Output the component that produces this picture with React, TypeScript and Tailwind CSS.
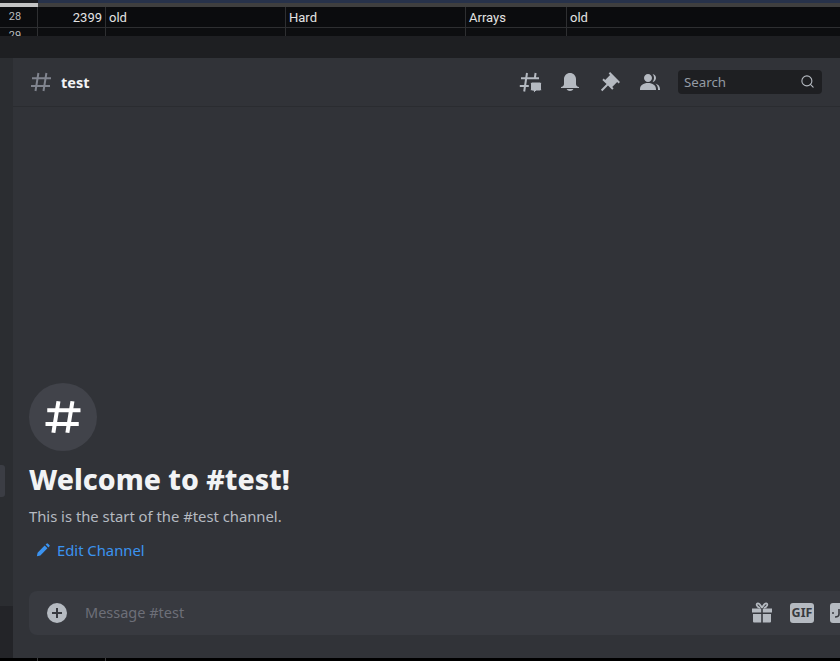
import React from 'react'
import { Search } from 'lucide-react'

const cols = ['w-[38px]', 'w-[68px]', 'w-[180px]', 'w-[180px]', 'w-[101px]', 'flex-1']

// Spreadsheet strip behind the Discord window
const SheetStrip = () => (
  <div className="h-[36px] bg-[#0b0c0e] font-['Roboto',sans-serif] text-[13px] text-[#e3e3e3] overflow-hidden">
    <div className="flex h-[7px]">
      <div className="w-[38px] flex flex-col">
        <div className="h-[3px] bg-[#1c1d20]" />
        <div className="h-[4px] bg-[#c4c4c4]" />
      </div>
      <div className="flex-1 flex flex-col">
        <div className="h-[3px] bg-[#27324a]" />
        <div className="h-[4px] bg-[#3f3f3f]" />
      </div>
    </div>
    <div className="flex h-[21px] border-b border-[#2e2f31]">
      <div className={`${cols[0]} border-r border-[#2e2f31] text-[11px] text-[#b9bbbe] flex items-center justify-center pr-[7px]`}>28</div>
      <div className={`${cols[1]} border-r border-[#2e2f31] flex items-center justify-end pr-[3px] pt-[1px]`}>2399</div>
      <div className={`${cols[2]} border-r border-[#2e2f31] flex items-center pl-[3px] pt-[1px]`}>old</div>
      <div className={`${cols[3]} border-r border-[#2e2f31] flex items-center pl-[3px] pt-[1px]`}>Hard</div>
      <div className={`${cols[4]} border-r border-[#2e2f31] flex items-center pl-[3px] pt-[1px]`}>Arrays</div>
      <div className={`${cols[5]} flex items-center pl-[3px] pt-[1px]`}>old</div>
    </div>
    <div className="flex h-[8px] bg-[#0d0e10]">
      <div className={`${cols[0]} border-r border-[#2e2f31] text-[11px] text-[#b9bbbe] leading-[13px] text-center pr-[7px] pt-[1px]`}>29</div>
      <div className={`${cols[1]} border-r border-[#2e2f31]`} />
      <div className={`${cols[2]} border-r border-[#2e2f31]`} />
      <div className={`${cols[3]} border-r border-[#2e2f31]`} />
      <div className={`${cols[4]} border-r border-[#2e2f31]`} />
      <div className={cols[5]} />
    </div>
  </div>
)

const HashIcon = ({ className, width = 2 }: { className?: string; width?: number }) => (
  <svg viewBox="0 0 24 24" className={className} fill="none" stroke="currentColor" strokeWidth={width}>
    <path d="M3 8.2h19M2 16h19M9.4 3l-2.9 18M17.4 3l-2.9 18" />
  </svg>
)

const ThreadIcon = () => (
  <svg viewBox="0 0 24 24" className="w-[24px] h-[24px] text-[#b5bac1]">
    <path d="M3 8.200h18M1.800 16h9M9 3L6.200 21.500M17.600 3l-.9 6" fill="none" stroke="currentColor" strokeWidth="2" />
    <path d="M14 12h8a1.500 1.500 0 0 1 1.500 1.500v6a1.500 1.500 0 0 1-1.500 1.500h-4l-2.400 2.600V21H14a1.500 1.500 0 0 1-1.500-1.500v-6A1.500 1.500 0 0 1 14 12z" fill="currentColor" stroke="#313338" strokeWidth="1" />
  </svg>
)

const BellIcon = () => (
  <svg viewBox="0 0 24 24" className="w-[24px] h-[24px] text-[#b5bac1]" fill="currentColor">
    <path d="M18 9V14C18 15.657 19.344 17 21 17V18H3V17C4.656 17 6 15.657 6 14V9C6 5.686 8.686 3 12 3C15.314 3 18 5.686 18 9ZM11.9999 21C10.5239 21 9.24793 20.19 8.55493 19H15.4449C14.7519 20.19 13.4759 21 11.9999 21Z" />
  </svg>
)

const PinIcon = () => (
  <svg viewBox="0 0 24 24" className="w-[24px] h-[24px] text-[#b5bac1]" fill="currentColor">
    <path d="M22 12L12.101 2.10101L10.686 3.51401L12.101 4.92901L7.15096 9.87801V9.88001L5.73596 8.46501L4.32196 9.88001L8.56496 14.122L2.90796 19.778L4.32196 21.192L9.97896 15.536L14.222 19.778L15.636 18.364L14.222 16.95L19.171 12H19.172L20.586 13.414L22 12Z" />
  </svg>
)

const MembersIcon = () => (
  <svg viewBox="0 0 24 24" className="w-[24px] h-[24px] text-[#b5bac1]" fill="currentColor">
    <path d="M14 8.00598C14 10.211 12.206 12.006 10 12.006C7.795 12.006 6 10.211 6 8.00598C6 5.80098 7.794 4.00598 10 4.00598C12.206 4.00598 14 5.80098 14 8.00598ZM2 19.006C2 15.473 5.29 13.006 10 13.006C14.711 13.006 18 15.473 18 19.006V20.006H2V19.006Z" />
    <path d="M20.0001 20.006H22.0001V19.006C22.0001 16.4433 20.2697 14.4415 17.5213 13.5352C19.0621 14.9127 20.0001 16.8059 20.0001 19.006V20.006Z" />
    <path d="M14.8834 11.9077C16.6657 11.5044 18.0001 9.9077 18.0001 8.00598C18.0001 5.96916 16.4693 4.28218 14.4971 4.0367C15.4322 5.09511 16.0001 6.48524 16.0001 8.00598C16.0001 9.44888 15.4889 10.7742 14.6378 11.8102C14.7203 11.8418 14.8022 11.8743 14.8834 11.9077Z" />
  </svg>
)

const PencilIcon = () => (
  <svg viewBox="0 0 16 16" className="w-[14px] h-[14px] text-[#3b93f0]" fill="currentColor">
    <path d="M1 15l.8-4L9.900 2.900l3.200 3.200L5 14.200zM11 1.800l1-1a1.200 1.200 0 0 1 1.700 0l1.500 1.500a1.200 1.200 0 0 1 0 1.700l-1 1z" />
  </svg>
)

const PlusIcon = () => (
  <svg viewBox="0 0 20 20" className="w-[20px] h-[20px]">
    <circle cx="10" cy="10" r="10" fill="#b5bac1" />
    <path d="M10 5v10M5 10h10" stroke="#383a40" strokeWidth="2" />
  </svg>
)

const GiftIcon = () => (
  <svg viewBox="0 0 24 24" className="w-[24px] h-[24px] text-[#b5bac1]" fill="currentColor">
    <path d="M2 7.500h9.200v4H2zM12.800 7.500H22v4h-9.200zM3 13h8.200v8.500H4a1 1 0 0 1-1-1zM12.800 13H21v7.500a1 1 0 0 1-1 1h-7.200z" />
    <path d="M12 7C10.500 3.500 8.500 2 7.300 2.600 6 3.300 6.800 6 10 7M12 7c1.500-3.500 3.500-5 4.700-4.400 1.300.7.500 3.400-2.700 4.400" fill="none" stroke="currentColor" strokeWidth="1.700" />
  </svg>
)

const StickerIcon = () => (
  <svg viewBox="0 0 24 20" className="w-[24px] h-[20px]">
    <rect width="24" height="20" rx="3" fill="#b5bac1" />
    <circle cx="3" cy="10" r="1" fill="#383a40" />
    <path d="M9 6v5c0 2-1.500 3-4 3" fill="none" stroke="#383a40" strokeWidth="1.600" />
  </svg>
)

export default function App() {
  return (
    <div className="w-[840px] h-[661px] overflow-hidden bg-black flex flex-col font-['Noto_Sans',sans-serif]">
      <SheetStrip />
      <div className="h-[22px] bg-[#1e1f22]" />

      <div className="h-[600px] flex bg-[#313338]">
        {/* left rail, mostly cut off */}
        <div className="w-[13px] flex flex-col bg-[#2b2d31]">
          <div className="flex-1 flex flex-col justify-end pb-[109px]">
            <div className="w-[5px] h-[32px] rounded-r-[3px] bg-[#3b3d44]" />
          </div>
          <div className="h-[52px] bg-[#232428]" />
        </div>

        <div className="flex-1 min-w-0 flex flex-col">
          {/* channel header */}
          <div className="h-[49px] shrink-0 flex items-center pl-[16px] pr-[18px] border-b border-[#2a2c30]">
            <HashIcon className="w-[24px] h-[24px] text-[#80848e]" />
            <span className="ml-[8px] text-[14.5px] leading-[20px] font-bold text-[#f2f3f5] mb-[1px]">test</span>
            <div className="ml-auto flex items-center gap-[16px]">
              <ThreadIcon />
              <BellIcon />
              <PinIcon />
              <MembersIcon />
              <div className="w-[144px] h-[24px] rounded-[4px] bg-[#1e1f22] flex items-center justify-between pl-[6px] pr-[7px]">
                <span className="text-[13.3px] text-[#949ba4] mt-[1px]">Search</span>
                <Search className="w-[15px] h-[15px] text-[#b5bac1] mb-[1px]" strokeWidth={1.75} />
              </div>
            </div>
          </div>

          {/* welcome block */}
          <div className="flex-1 flex flex-col justify-end pl-[16px] pb-[28px]">
            <div className="w-[68px] h-[68px] rounded-full bg-[#41434a] flex items-center justify-center text-white">
              <HashIcon className="w-[42px] h-[42px]" width={2.3} />
            </div>
            <h1 className="mt-[8px] text-[28.4px] leading-[40px] font-extrabold text-[#f2f3f5]">Welcome to #test!</h1>
            <p className="mt-[7px] text-[14.8px] leading-[20px] text-[#b5bac1]">This is the start of the #test channel.</p>
            <div className="mt-[12px] mb-[1px] ml-[7px] h-[24px] flex items-center gap-[7px] text-[14.8px] text-[#3b93f0]">
              <PencilIcon />
              <span>Edit Channel</span>
            </div>
          </div>

          {/* message input, runs past the window edge */}
          <div className="h-[67px] shrink-0 pl-[16px] pb-[23px]">
            <div className="h-[44px] w-[840px] rounded-[8px] bg-[#383a40] flex items-center pl-[18px] pr-[15px]">
              <PlusIcon />
              <span className="ml-[18px] text-[14.5px] text-[#6d6f78]">Message #test</span>
              <div className="ml-auto flex items-center gap-[16px]">
                <GiftIcon />
                <div className="w-[24px] h-[20px] rounded-[3px] bg-[#b5bac1] text-[#383a40] text-[12.5px] font-bold flex items-center justify-center">GIF</div>
                <StickerIcon />
              </div>
            </div>
          </div>
        </div>
      </div>

      <div className="flex h-[3px] bg-black">
        <div className="w-[38px] border-r border-[#3a3a3a]" />
        <div className="w-[68px] border-r border-[#3a3a3a]" />
      </div>
    </div>
  )
}
